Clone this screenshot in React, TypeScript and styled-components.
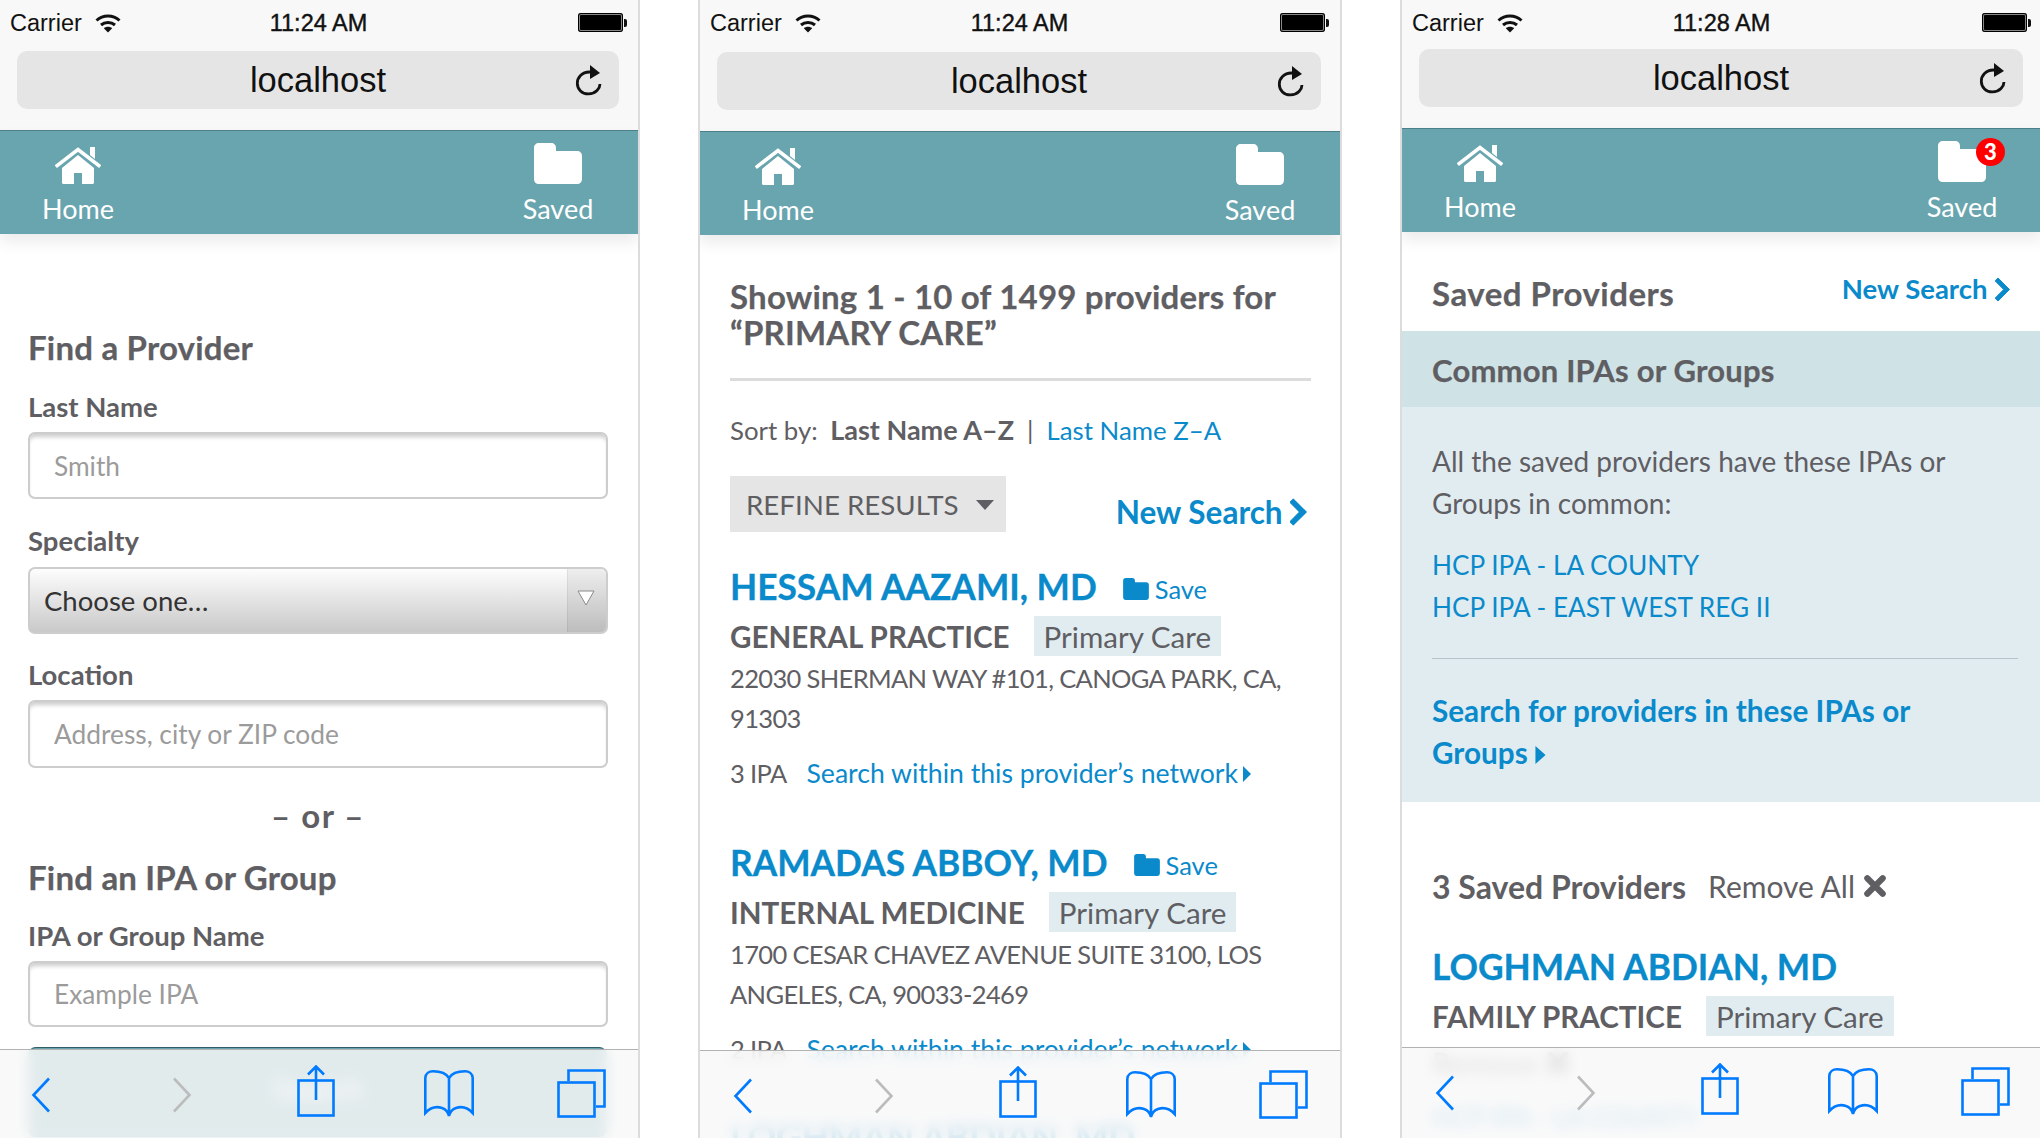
import React from "react";
import styled, { createGlobalStyle } from "styled-components";

const BODY = '#5f5e63';
const LINK = '#0a8acb';
const IOS = '#007aff';

const Global = createGlobalStyle`
  html, body { margin: 0; padding: 0; background: #fff; }
  body { font-family: Lato, "Open Sans", sans-serif; color: ${BODY}; }
  * { box-sizing: border-box; }
`;

const Page = styled.div`
  display: flex; gap: 58px; width: 2040px; height: 1138px; overflow: hidden; background: #fff;
`;
const Phone = styled.section<{ $w: number; $left?: boolean; $right?: boolean }>`
  position: relative; flex: none; width: ${p => p.$w}px; height: 1138px; overflow: hidden;
  border-left: ${p => (p.$left ? '2px solid #dcdcdc' : 'none')};
  border-right: ${p => (p.$right ? '2px solid #dcdcdc' : 'none')};
`;
const Screen = styled.div<{ $bleed?: number }>`
  width: calc(100% + ${p => p.$bleed ?? 0}px); height: 100%; display: flex; flex-direction: column;
`;
const Chrome = styled.header`
  flex: none; background: #f8f8f8; padding-bottom: 21px;
`;
const Status = styled.div<{ $h: number }>`
  height: ${p => p.$h}px; padding: 9px 11px 0 10px; display: grid; grid-template-columns: 1fr auto 1fr; align-items: start;
  font-family: "Liberation Sans", Arial, sans-serif; color: #111; font-size: 23.5px; line-height: 28px;
`;
const Carrier = styled.div`
  display: flex; gap: 13px; align-items: center;
`;
const Time = styled.div`
  font-size: 23.5px; -webkit-text-stroke: 0.4px #111;
`;
const Battery = styled.div`
  justify-self: end; display: flex; align-items: center; margin-top: 4px;
`;
const BatteryBody = styled.div`
  width: 45px; height: 19px; background: #000; border-radius: 3px; box-shadow: inset 0 0 0 1px #000, inset 0 0 0 2px #fff8;
`;
const BatteryNub = styled.div`
  width: 3px; height: 8px; background: #111; border-radius: 0 2px 2px 0; margin-left: 1px;
`;
const UrlBar = styled.div`
  height: 58px; margin: 5px 19px 0 17px; border-radius: 10px; background: #e5e5e5; display: grid; grid-template-columns: 1fr auto 1fr; align-items: center;
  font-family: "Liberation Sans", Arial, sans-serif; color: #111; font-size: 34.5px;
  svg { justify-self: end; margin-right: 17px; }
`;
const Nav = styled.nav`
  position: relative; z-index: 1; flex: none; height: 104px; background: #69a5ae; border-top: 1px solid #4c7f88; box-shadow: 0 8px 14px rgba(0,0,0,.08);
  display: flex; justify-content: space-between; padding: 12px 30px 0 28px; color: #fff;
`;
const NavItem = styled.a`
  position: relative; width: 100px; display: flex; flex-direction: column; align-items: center; font-size: 27px; line-height: 30px;
`;
const NavIcon = styled.div`
  height: 41px; display: flex; align-items: flex-end; margin-bottom: 10px;
`;
const Badge = styled.span`
  position: absolute; top: -3px; right: 7px; width: 29px; height: 28px; border-radius: 50%; background: #f00; color: #fff; font-size: 22px; font-weight: 900; line-height: 28px; text-align: center;
`;
const Content = styled.main<{ $pt?: number; $pl: number }>`
  flex: none; padding: ${p => p.$pt ?? 0}px 30px 0 ${p => p.$pl}px;
`;
const Heading = styled.h2<{ $mt?: number; $size?: number; $ls?: number }>`
  margin: ${p => p.$mt ?? 0}px 0 0; font-size: ${p => p.$size ?? 33}px; line-height: 36px; font-weight: 700; letter-spacing: ${p => p.$ls ?? 0.2}px; color: ${BODY}; -webkit-text-stroke: 0.25px ${BODY};
`;
const FieldLabel = styled.label<{ $mt: number; $mb?: number }>`
  display: block; margin: ${p => p.$mt}px 0 ${p => p.$mb ?? 0}px; font-size: 27.5px; line-height: 30px; font-weight: 700;
`;
const TextInput = styled.input<{ $h?: number }>`
  display: block; width: 100%; height: ${p => p.$h ?? 67}px; margin-top: 10px; border: 2px solid #cdcdcd; border-radius: 7px; padding: 0 24px;
  box-shadow: inset 0 5px 4px -2px rgba(0,0,0,.2); background: #fff; outline: none;
  font: 400 26.3px Lato, sans-serif; color: #333;
  &::placeholder { color: #9b9b9b; opacity: 1; }
`;
const SelectWrap = styled.div`
  position: relative; margin-top: 11px; height: 67px;
`;
const Select = styled.select`
  appearance: none; display: block; width: 100%; height: 100%; border: 2px solid #cdcdcd; border-radius: 7px; padding: 0 14px;
  background: linear-gradient(#fdfdfd, #c9c9c9); outline: none;
  font: 400 27.5px Lato, sans-serif; color: #333;
`;
const SelectArrow = styled.div`
  position: absolute; top: 2px; right: 2px; bottom: 2px; width: 39px; background: rgba(0,0,0,.06); border-left: 1px solid rgba(0,0,0,.06); border-radius: 0 6px 6px 0;
  display: flex; justify-content: center; padding: 21px 3px 0 0;
`;
const Or = styled.div`
  margin-top: 29px; text-align: center; font-size: 33px; line-height: 36px; font-weight: 700; letter-spacing: 1.5px;
`;
const SearchButton = styled.button`
  display: block; width: 579px; height: 90px; margin: 20px 0 0 0; padding: 0 0 10px; border: none; border-top: 1px solid #2f5f68; border-radius: 8px; background: #69a5ae; color: #fff;
  font: 700 30px Lato, sans-serif;
`;
const ResultsHeading = styled(Heading)`
  padding-bottom: 28px; border-bottom: 3px solid #dcdcdc; margin-right: -1px;
`;
const SortLine = styled.div`
  margin-top: 34px; font-size: 25.8px; line-height: 30px;
`;
const Strong = styled.strong`
  margin: 0 13px 0 6px; font-weight: 700; font-size: 27px;
`;
const Sep = styled.span`
  margin: 0 13px 0 0;
`;
const TextLink = styled.a`
  color: ${LINK};
`;
const ToolRow = styled.div`
  display: flex; justify-content: space-between; align-items: flex-start; margin-top: 31px;
`;
const Refine = styled.div`
  width: 276px; height: 56px; background: #e5e5e5; display: flex; align-items: center; justify-content: space-between; padding: 0 12px 0 16px;
  font-size: 27.7px;
`;
const Caret = styled.span`
  width: 0; height: 0; border-left: 9px solid transparent; border-right: 9px solid transparent; border-top: 10px solid ${BODY}; margin-top: 2px;
`;
const NewSearch = styled.a<{ $mt: number; $size: number; $mr?: number }>`
  display: flex; align-items: center; gap: 7px; color: ${LINK}; font-size: ${p => p.$size}px; line-height: 36px; font-weight: 700; margin: ${p => p.$mt}px ${p => p.$mr ?? 0}px 0 0; white-space: nowrap;
`;
const NameRow = styled.div<{ $mt: number }>`
  display: flex; align-items: center; gap: 26px; margin-top: ${p => p.$mt}px; height: 44px; padding-bottom: 2px;
`;
const Name = styled.a`
  color: ${LINK}; font-size: 35.3px; font-weight: 700; -webkit-text-stroke: 0.3px ${LINK}; white-space: nowrap;
`;
const Save = styled.a`
  display: flex; align-items: center; gap: 6px; color: ${LINK}; font-size: 25.5px; margin-top: 6px;
`;
const SpecRow = styled.div`
  display: flex; align-items: center; gap: 24px; margin-top: 7px; height: 40px;
`;
const Spec = styled.div`
  font-size: 29.6px; font-weight: 700; white-space: nowrap;
`;
const Tag = styled.span`
  height: 40px; display: flex; align-items: center; padding: 0 10px; background: #e0ecf0; font-size: 29.6px; white-space: nowrap;
`;
const Address = styled.div`
  margin-top: 2px; font-size: 25.5px; line-height: 40px; letter-spacing: -0.65px;
`;
const Ipa = styled.div`
  display: flex; align-items: center; gap: 20px; margin-top: 17px; font-size: 25.5px; line-height: 36px; letter-spacing: -0.65px; white-space: nowrap;
`;
const IpaLink = styled.a`
  display: flex; align-items: center; gap: 5px; color: ${LINK}; font-size: 26.6px; letter-spacing: 0;
`;
const SmallCaret = styled.span`
  width: 0; height: 0; border-top: 8px solid transparent; border-bottom: 8px solid transparent; border-left: 8px solid ${LINK}; margin-top: 2px;
`;
const SavedHeader = styled.div`
  height: 99px; padding: 43px 32px 0 30px; display: flex; justify-content: space-between; align-items: flex-start;
`;
const Band = styled.div`
  height: 76px; display: flex; align-items: center; padding: 2px 30px 0; background: #cfe3e6;
`;
const Panel = styled.div`
  height: 395px; padding: 33px 24px 0 30px; background: #e1ecf1;
`;
const PanelRule = styled.hr`
  height: 1px; margin: 30px 0 0; border: 0; background: #b4c4ca;
`;
const PanelLine = styled.div<{ $mt?: number; $size?: number }>`
  margin-top: ${p => p.$mt ?? 0}px; font-size: ${p => p.$size ?? 28}px; line-height: 42px;
`;
const BoldLink = styled.a`
  color: ${LINK}; font-weight: 700; font-size: 29.7px; line-height: 42px; display: block; margin-top: 31px;
  svg { margin-left: 7px; }
`;
const SavedBody = styled.div`
  padding: 0 30px;
`;
const CountRow = styled.div`
  display: flex; align-items: center; gap: 22px; margin-top: 66px; height: 36px;
`;
const CountTitle = styled.div`
  font-size: 32px; font-weight: 700;
`;
const Remove = styled.div<{ $mt?: number }>`
  display: flex; align-items: center; gap: 9px; font-size: 30px; line-height: 36px; margin-top: ${p => p.$mt ?? 0}px;
`;
const Ghost = styled.div`
  margin-top: 18px; font-size: 26.2px; line-height: 36px;
`;
const Toolbar = styled.footer<{ $top: number; $pl?: number }>`
  position: absolute; left: 0; right: 0; top: ${p => p.$top}px; bottom: 0; z-index: 2; border-top: 1px solid #b2b2b2;
  background: rgba(248,248,248,.84); backdrop-filter: blur(7px);
  display: grid; grid-template-columns: 82px 200px 68px 198px 66px; justify-items: center; align-items: start; padding: 15px 0 0 ${p => p.$pl ?? 0}px;
`;
const ToolIcon = styled.svg<{ $mt: number }>`
  display: block; margin-top: ${p => p.$mt}px; fill: none; stroke: ${IOS}; stroke-width: 2.6;
`;
const ForwardIcon = styled(ToolIcon)`
  stroke: #bcbcbc;
`;

const Wifi = () => (
  <svg width="26" height="19" viewBox="0 0 26 19" fill="none" stroke="#111" strokeWidth="3">
    <path d="M1.5 6.5C8 0.5 18 0.5 24.5 6.5" />
    <path d="M6 11C10 7.5 16 7.5 20 11" />
    <path d="M13 18.5L8.8 14.2C11 12.2 15 12.2 17.2 14.2Z" fill="#111" stroke="none" />
  </svg>
);
const Reload = () => (
  <svg width="27" height="31" viewBox="0 0 27 31" fill="none">
    <path d="M18.5 7.5C14 6.5 9 7 5.5 10.5C1 15 1.5 22 5.5 26C9.5 30 17.5 30 22 25.5C24 23.5 25 21 25 19" stroke="#111" strokeWidth="2.8" />
    <path d="M15 0L25 8L15 14Z" fill="#111" />
  </svg>
);
const HomeIcon = () => (
  <svg width="46" height="37" viewBox="0 0 46 37">
    <path d="M0.8 19.7L23 2.5L45.2 19.7" fill="none" stroke="#fff" strokeWidth="3.6" />
    <path d="M35 0H40V12L35 8Z" fill="#fff" />
    <path d="M7 21L23 8L39 21V35.5C39 36.4 38.4 37 37.5 37H27V26H19V37H8.5C7.6 37 7 36.4 7 35.5Z" fill="#fff" />
  </svg>
);
const Folder = ({ w = 48, h = 41, c = '#fff' }: { w?: number; h?: number; c?: string }) => (
  <svg width={w} height={h} viewBox="0 0 48 41">
    <path d="M5 0H17C20 0 22 2 22 5V8H43C46 8 48 10 48 13V36C48 39 46 41 43 41H5C2 41 0 39 0 36V5C0 2 2 0 5 0Z" fill={c} />
  </svg>
);
const Chevron = ({ h = 28 }: { h?: number }) => (
  <svg width={h * 0.62} height={h} viewBox="0 0 16 26">
    <path d="M3 1L0 4L9 13L0 22L3 25L15 13Z" fill={LINK} stroke={LINK} strokeWidth="1" strokeLinejoin="round" />
  </svg>
);
const CloseX = () => (
  <svg width="22" height="22" viewBox="0 0 20 20">
    <path d="M3 3L17 17M17 3L3 17" stroke={BODY} strokeWidth="5.6" strokeLinecap="round" />
  </svg>
);
const Back = () => (
  <ToolIcon $mt={12} width="20" height="36" viewBox="0 0 20 36"><path d="M18 1.5L2.5 18L18 34.5" /></ToolIcon>
);
const Forward = () => (
  <ForwardIcon $mt={12} width="20" height="36" viewBox="0 0 20 36"><path d="M2 1.5L17.5 18L2 34.5" /></ForwardIcon>
);
const Share = () => (
  <ToolIcon $mt={0} width="38" height="52" viewBox="0 0 38 52">
    <rect x="1.5" y="15.5" width="35" height="35" />
    <path d="M19 2V35M11 9.5L19 1.5L27 9.5" />
  </ToolIcon>
);
const Book = () => (
  <ToolIcon $mt={5} width="50" height="47" viewBox="0 0 50 47">
    <path d="M25 8C22 3 15 1.300 9 1.300C5 1.300 1.600 3.500 1.300 8V43C6 38 12 36 18 38C21 39 24 42 25 46C26 42 29 39 32 38C38 36 44 38 48.700 43V8C48.400 3.500 45 1.300 41 1.300C35 1.300 28 3 25 8ZM25 8V46" />
  </ToolIcon>
);
const Tabs = () => (
  <ToolIcon $mt={4} width="49" height="49" viewBox="0 0 49 49">
    <rect x="1.500" y="13.500" width="36" height="34" />
    <path d="M11.500 12V1.500H47.500V37.500H39" />
  </ToolIcon>
);

const PhoneChrome = ({ statusH, time, badge }: { statusH: number; time: string; badge?: boolean }) => (
  <>
    <Chrome>
      <Status $h={statusH}>
        <Carrier>Carrier <Wifi /></Carrier>
        <Time>{time}</Time>
        <Battery><BatteryBody /><BatteryNub /></Battery>
      </Status>
      <UrlBar><span /><span>localhost</span><Reload /></UrlBar>
    </Chrome>
    <Nav>
      <NavItem><NavIcon><HomeIcon /></NavIcon>Home</NavItem>
      <NavItem>
        <NavIcon><Folder /></NavIcon>Saved
        {badge && <Badge>3</Badge>}
      </NavItem>
    </Nav>
  </>
);
const BottomBar = ({ top, pl }: { top: number; pl?: number }) => (
  <Toolbar $top={top} $pl={pl}><Back /><Forward /><Share /><Book /><Tabs /></Toolbar>
);

const Provider = ({ mt, name, spec, addr, ipa }: { mt: number; name: string; spec: string; addr: string; ipa: string }) => (
  <>
    <NameRow $mt={mt}>
      <Name>{name}</Name>
      <Save><Folder w={26} h={22} c={LINK} />Save</Save>
    </NameRow>
    <SpecRow><Spec>{spec}</Spec><Tag>Primary Care</Tag></SpecRow>
    <Address>{addr}</Address>
    <Ipa>{ipa}<IpaLink>Search within this provider’s network<SmallCaret /></IpaLink></Ipa>
  </>
);

export default function App() {
  return (
    <Page>
      <Global />
      <Phone $w={640} $right>
        <Screen>
          <PhoneChrome statusH={46} time="11:24 AM" />
          <Content $pt={95} $pl={28}>
            <Heading>Find a Provider</Heading>
            <FieldLabel $mt={27}>Last Name</FieldLabel>
            <TextInput placeholder="Smith" />
            <FieldLabel $mt={27}>Specialty</FieldLabel>
            <SelectWrap>
              <Select defaultValue="one"><option value="one">Choose one…</option></Select>
              <SelectArrow>
                <svg width="18" height="16" viewBox="0 0 18 16"><path d="M1 1H17L9 15Z" fill="#fff" stroke="#8a8a8a" strokeWidth="1" /></svg>
              </SelectArrow>
            </SelectWrap>
            <FieldLabel $mt={26}>Location</FieldLabel>
            <TextInput $h={68} placeholder="Address, city or ZIP code" />
            <Or>– or –</Or>
            <Heading $mt={26}>Find an IPA or Group</Heading>
            <FieldLabel $mt={26} $mb={1}>IPA or Group Name</FieldLabel>
            <TextInput $h={66} placeholder="Example IPA" />
            <SearchButton>Search</SearchButton>
          </Content>
        </Screen>
        <BottomBar top={1049} />
      </Phone>

      <Phone $w={644} $left $right>
        <Screen>
          <PhoneChrome statusH={47} time="11:24 AM" />
          <Content $pt={43} $pl={30}>
            <ResultsHeading>Showing 1 - 10 of 1499 providers for<br />“PRIMARY CARE”</ResultsHeading>
            <SortLine>Sort by: <Strong>Last Name A–Z</Strong><Sep>|</Sep><TextLink>Last Name Z–A</TextLink></SortLine>
            <ToolRow>
              <Refine>REFINE RESULTS<Caret /></Refine>
              <NewSearch $mt={18} $size={31.5} $mr={3}>New Search <Chevron /></NewSearch>
            </ToolRow>
            <Provider mt={33} name="HESSAM AAZAMI, MD" spec="GENERAL PRACTICE" addr="22030 SHERMAN WAY #101, CANOGA PARK, CA, 91303" ipa="3 IPA" />
            <Provider mt={50} name="RAMADAS ABBOY, MD" spec="INTERNAL MEDICINE" addr="1700 CESAR CHAVEZ AVENUE SUITE 3100, LOS ANGELES, CA, 90033-2469" ipa="2 IPA" />
            <NameRow $mt={48}><Name>LOGHMAN ABDIAN, MD</Name></NameRow>
          </Content>
        </Screen>
        <BottomBar top={1050} pl={2} />
      </Phone>

      <Phone $w={640} $left>
        <Screen $bleed={2}>
          <PhoneChrome statusH={44} time="11:28 AM" badge />
          <SavedHeader>
            <Heading $ls={0.5}>Saved Providers</Heading>
            <NewSearch $mt={-4} $size={27.5}>New Search <Chevron h={25} /></NewSearch>
          </SavedHeader>
          <Band><Heading $size={31}>Common IPAs or Groups</Heading></Band>
          <Panel>
            <PanelLine>All the saved providers have these IPAs or<br />Groups in common:</PanelLine>
            <PanelLine $mt={20} $size={26.2}><TextLink>HCP IPA - LA COUNTY</TextLink></PanelLine>
            <PanelLine $size={26.2}><TextLink>HCP IPA - EAST WEST REG II</TextLink></PanelLine>
            <PanelRule />
            <BoldLink>Search for providers in these IPAs or<br />Groups<svg width="11" height="18" viewBox="0 0 9 16"><path d="M0 0L9 8L0 16Z" fill={LINK} /></svg></BoldLink>
          </Panel>
          <SavedBody>
            <CountRow><CountTitle>3 Saved Providers</CountTitle><Remove>Remove All <CloseX /></Remove></CountRow>
            <NameRow $mt={41}><Name>LOGHMAN ABDIAN, MD</Name></NameRow>
            <SpecRow><Spec>FAMILY PRACTICE</Spec><Tag>Primary Care</Tag></SpecRow>
            <Remove $mt={9}>Remove <CloseX /></Remove>
            <Ghost><TextLink>HCP IPA - LA COUNTY</TextLink></Ghost>
          </SavedBody>
        </Screen>
        <BottomBar top={1047} pl={2} />
      </Phone>
    </Page>
  );
}
